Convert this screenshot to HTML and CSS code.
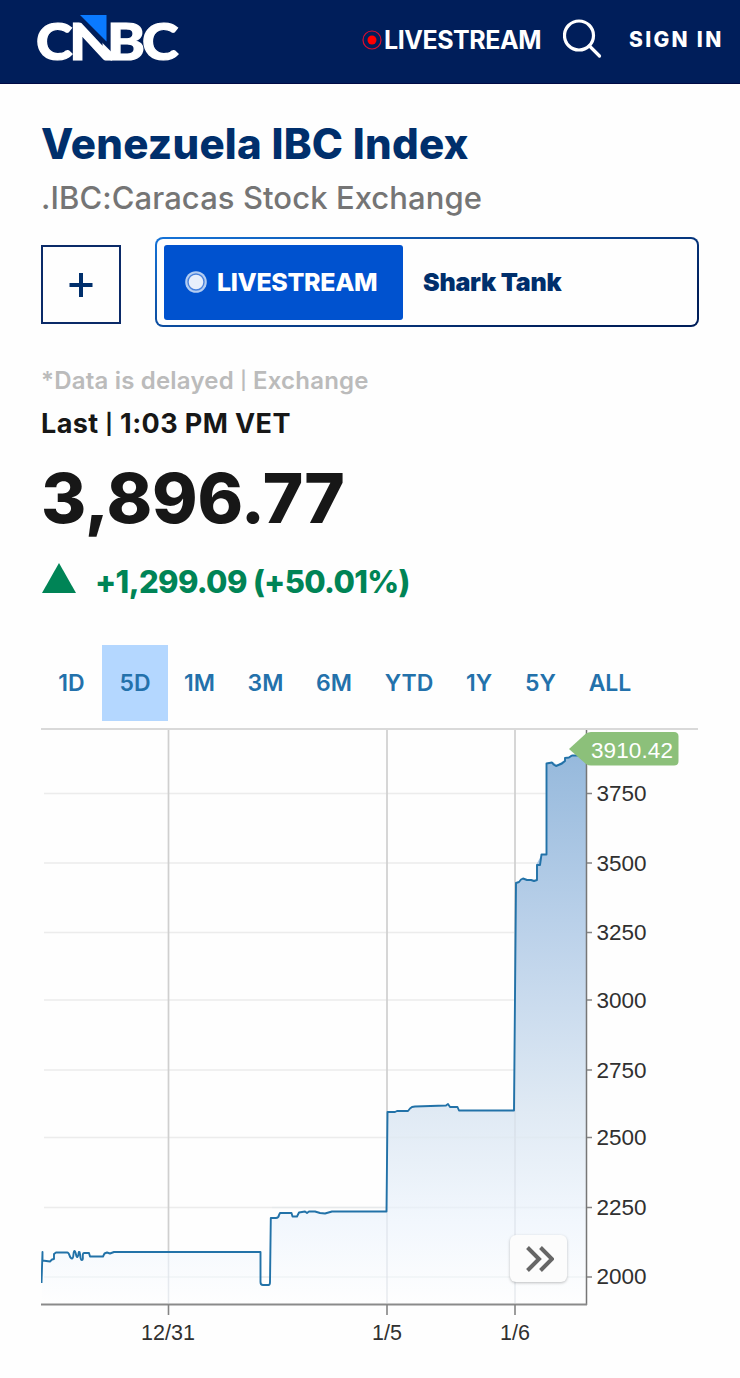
FILE: index.html
```html
<!DOCTYPE html>
<html lang="en">
<head>
	<meta charset="utf-8">
	<title>Venezuela IBC Index - CNBC</title>
	<link rel="stylesheet" href="styles.css">
</head>
<body>
	<header class="topbar">
		<svg class="logo" width="144" height="83" viewBox="36 0 144 83">
			<g class="logo-text">
				<text x="36" y="59.500" textLength="36.500" lengthAdjust="spacingAndGlyphs">C</text>
				<text x="69" y="59.500" textLength="47" lengthAdjust="spacingAndGlyphs">N</text>
			</g>
			<polygon points="80,12 113,12 113,53.5 80.500,21" fill="#001e5a"/>
			<polygon points="80,15 106.500,15 106.500,41.500" fill="#0a7aff"/>
			<g class="logo-text">
				<text x="107" y="59.500" textLength="38" lengthAdjust="spacingAndGlyphs">B</text>
				<text x="142" y="59.500" textLength="36.500" lengthAdjust="spacingAndGlyphs">C</text>
			</g>
		</svg>
		<a class="live-link">
			<svg width="20" height="20" viewBox="0 0 20 20">
				<circle cx="10" cy="10" r="9" fill="none" stroke="#d80d30" stroke-width="1.200"/>
				<circle cx="10" cy="10" r="4.500" fill="#ff0000"/>
			</svg>
			<span>LIVESTREAM</span>
		</a>
		<svg class="search" width="40" height="40" viewBox="0 0 40 40" fill="none" stroke="#fff" stroke-width="3.200" stroke-linecap="round">
			<circle cx="16" cy="16.500" r="14.500"/>
			<path d="M26.500 27L36.500 37"/>
		</svg>
		<a class="signin">SIGN IN</a>
	</header>

	<main>
		<h1>Venezuela IBC Index</h1>
		<h2>.IBC:Caracas Stock Exchange</h2>

		<div class="actions">
			<button class="add">
				<svg width="24" height="24" viewBox="0 0 24 24"><path d="M12 0V24M0.500 12H23.500" stroke="#002f6c" stroke-width="4"/></svg>
			</button>
			<div class="player">
				<div class="watch">
					<svg width="22" height="22" viewBox="0 0 22 22">
						<circle cx="11" cy="11" r="10.800" fill="#b3cdf2"/>
						<circle cx="11" cy="11" r="8" fill="#e8effb" stroke="#4a82dc" stroke-width="1.400"/>
					</svg>
					<span>LIVESTREAM</span>
				</div>
				<span class="show">Shark Tank</span>
			</div>
		</div>

		<div class="delayed">*Data is delayed <span class="bar">|</span> Exchange</div>
		<div class="last">Last <span class="bar">|</span> 1:03 PM VET</div>
		<div class="price">3,896.77</div>
		<div class="change">
			<svg width="34" height="30" viewBox="0 0 34 30"><polygon points="17,0 34,30 0,30" fill="#008456"/></svg>
			<span>+1,299.09 (+50.01%)</span>
		</div>

		<nav class="ranges">
			<a>1D</a>
			<a class="active">5D</a>
			<a>1M</a>
			<a>3M</a>
			<a>6M</a>
			<a>YTD</a>
			<a>1Y</a>
			<a>5Y</a>
			<a>ALL</a>
		</nav>

		<div class="chart">
			<svg width="657" height="630" viewBox="41 728 657 630">
				<defs>
					<linearGradient id="fill" gradientUnits="userSpaceOnUse" x1="0" y1="755" x2="0" y2="1304">
						<stop offset="0" stop-color="#96b9dc"/>
						<stop offset="0.300" stop-color="#b9d0e9"/>
						<stop offset="0.650" stop-color="#e0eaf4"/>
						<stop offset="0.850" stop-color="#f2f7fd"/>
						<stop offset="1" stop-color="#fefefe"/>
					</linearGradient>
				</defs>
				<path class="grid-h" d="M44 793.500H587M44 863H587M44 932.500H587M44 1000H587M44 1070H587M44 1137.500H587M44 1207.500H587M44 1277H587"/>
				<path class="grid-v" d="M168.500 729V1304M387 729V1304M515 729V1304"/>
				<path d="M41 729H698" stroke="#d9d9d9" stroke-width="2"/>
				<path class="area" fill="url(#fill)" d="M42 1283L43 1252V1260L50 1262L54 1258V1254L56 1252H68L71 1258L74 1251L77 1258L80 1252L82 1260L84 1253H89L90 1256H103L105 1253L114 1252H260.500V1282L262 1285H269L270.500 1218H277L280 1213H291L293 1216H297L299 1212L305 1211H318L324 1213L332 1211H386.500L387.500 1112L408 1110.500L412 1106.500L447 1105.500L449 1107H457L459 1110H514L516 883L523 878.500L536 880V865L542 854H546.500V763L553 762L557 765L563 761L571 755H586V1304H42Z"/>
				<path d="M168.500 1253V1303M387 1112V1303M515 1000V1303" stroke="#cbd3dc" stroke-opacity="0.450" stroke-width="1.500"/>
				<path d="M44 1277H586M272 1207.500H586M389 1137.500H586" stroke="#dde4ec" stroke-opacity="0.350" stroke-width="1.500"/>
				<path class="line" d="M41.500 1283L42.500 1252V1260.500L50 1261.500L52 1259.500L54 1259V1254L56 1252.500H67C70 1252 69 1258.500 72 1258.500C74 1258.500 73 1251 74.500 1251C76 1251 76 1258 77.500 1257C79 1256 78 1251 79.500 1252C80.500 1254 80 1260.500 82 1260C84 1260 81.500 1253 84 1253H89L90 1256.500H103L104.500 1253.500L107 1252.500L110 1253.500L114 1252H260.500V1282C260.500 1284 261 1285 263 1285H268.500Q270 1285 270 1282L270.800 1218H276Q278.500 1218 279 1215L280 1213H291.500L292.500 1216.500H297L299 1212.500L305 1211.500L307 1213L309 1211.500H315L320 1213L325 1213.500L332 1211.500H386.500L387.500 1112H395L397 1111H408L410 1108.500L412 1107L415 1106.500L446 1105.500L448 1104L450 1107H457.500L459 1110.500H514L516 883L519 882L521 879.500L523 878.500L527 880H531L534 881L537 880V865H540L541.500 854.500H546.500V763.500L552 762.500L553.500 764.500L556 766L562 763.500L565 761V758L569 757.500L572 755.500H586"/>
				<path d="M586.500 730V1305" stroke="#767676" stroke-width="1.500"/>
				<path d="M41 1304.500H587" stroke="#8a8a8a" stroke-width="1.800"/>
				<path d="M587 793.500H592M587 863H592M587 932.500H592M587 1000H592M587 1070H592M587 1137.500H592M587 1207.500H592M587 1277H592M168.500 1304V1315M387 1304V1315M515 1304V1315" stroke="#858585" stroke-width="1.600"/>
				<g class="axis">
					<text x="596.500" y="801">3750</text>
					<text x="596.500" y="870.500">3500</text>
					<text x="596.500" y="940">3250</text>
					<text x="596.500" y="1007.500">3000</text>
					<text x="596.500" y="1077.500">2750</text>
					<text x="596.500" y="1145">2500</text>
					<text x="596.500" y="1214.500">2250</text>
					<text x="596.500" y="1284">2000</text>
				</g>
				<g class="axis dates">
					<text x="168" y="1339.500">12/31</text>
					<text x="387" y="1339.500">1/5</text>
					<text x="515" y="1339.500">1/6</text>
				</g>
				<path d="M569 749L586 733.500Q588 732 591 732H674Q678.500 732 678.500 736.500V761Q678.500 765.500 674 765.500H591Q588 765.500 586 764Z" fill="#8cc07a"/>
				<text class="current" x="591" y="758" textLength="82">3910.42</text>
			</svg>
			<button class="forward">
				<svg width="28" height="26" viewBox="0 0 28 26" fill="none" stroke="#666" stroke-width="4"><path d="M1.500 1.500L13 13L1.500 24.500M14.500 1.500L26 13L14.500 24.500"/></svg>
			</button>
		</div>
	</main>
</body>
</html>
```
FILE: styles.css
```css
*{
	box-sizing: border-box;
}
body{
	background-color: #fefefe;
	font-family: Inter, "Open Sans", sans-serif;
	margin: 0px;
}
button{
	background: none;
	border: none;
	padding: 0px;
}
svg{
	display: block;
	flex: none;
}
.topbar{
	align-items: center;
	background-color: #001e5a;
	border-bottom: 1px solid #000b45;
	color: #fff;
	display: flex;
	height: 84px;
	padding: 0px 0px 0px 36px;
	white-space: nowrap;
}
.logo-text{
	fill: #fff;
	font-family: Lato, sans-serif;
	font-size: 51px;
	font-weight: 900;
	stroke: #fff;
	stroke-width: 1.2;
}
.live-link{
	align-items: center;
	display: flex;
	font-size: 25px;
	font-weight: 700;
	gap: 2px;
	letter-spacing: -0.45px;
	margin: -4px 0px 0px 182px;
	width: 201px;
}
.search{
	margin-top: -6px;
}
.signin{
	font-size: 21px;
	font-weight: 800;
	letter-spacing: 2.3px;
	margin: -4px 0px 0px 26px;
}
main{
	padding: 35px 41px 0px;
}
h1{
	color: #002f6c;
	font-size: 42px;
	font-weight: 800;
	letter-spacing: 0.25px;
	line-height: 50px;
	margin: 0px;
}
h2{
	color: #757575;
	font-size: 31px;
	font-weight: 500;
	letter-spacing: 0.08px;
	line-height: 40px;
	margin: 9px 0px 0px;
	height: 59px;
}
.actions{
	display: flex;
	align-items: flex-end;
	gap: 34px;
}
.add{
	align-items: center;
	border: 2px solid #0b2a68;
	display: flex;
	height: 79px;
	justify-content: center;
	margin-bottom: 3px;
	width: 80px;
}
.player{
	align-items: center;
	background: linear-gradient(#fefefe, #fefefe) padding-box, linear-gradient(165deg, #1573d8, #001e5a 85%) border-box;
	border: 2px solid transparent;
	border-radius: 8px;
	display: flex;
	flex: 1;
	height: 90px;
	padding-left: 7px;
}
.watch{
	align-items: center;
	background-color: #0052cf;
	border-radius: 3px;
	color: #fff;
	display: flex;
	font-size: 25px;
	font-weight: 800;
	gap: 10px;
	height: 75px;
	letter-spacing: -0.35px;
	padding-left: 21px;
	width: 239px;
}
.show{
	color: #002f6c;
	font-size: 25px;
	font-weight: 900;
	letter-spacing: -0.25px;
	margin-left: 20px;
}
.bar{
	font-size: 0.75em;
	vertical-align: 2px;
}
.delayed{
	color: #bbb;
	font-size: 24px;
	font-weight: 600;
	letter-spacing: 0.2px;
	line-height: 30px;
	margin-top: 39px;
}
.last{
	color: #171717;
	font-size: 27px;
	font-weight: 700;
	letter-spacing: 0.4px;
	line-height: 34px;
	margin-top: 11px;
}
.price{
	color: #171717;
	font-size: 69px;
	font-weight: 800;
	letter-spacing: -0.3px;
	line-height: 80px;
	margin-top: 17px;
}
.change{
	align-items: center;
	color: #008456;
	display: flex;
	font-size: 31px;
	font-weight: 800;
	gap: 19px;
	height: 40px;
	letter-spacing: -0.65px;
	margin-top: 23px;
	padding-left: 1px;
}
.change svg{
	margin-top: -7px;
}
.ranges{
	color: #2371ab;
	display: grid;
	font-size: 23px;
	font-weight: 600;
	grid-template-columns: 61px 66px 63px 69px 68px 82px 58px 65px 74px;
	height: 75px;
	line-height: 76px;
	margin-top: 44px;
	text-align: center;
}
.ranges .active{
	background-color: #b4d7ff;
}
.chart{
	margin-top: 8px;
	position: relative;
}
.grid-h{
	stroke: #ececec;
	stroke-width: 1.7;
}
.grid-v{
	stroke: #cfcfcf;
	stroke-width: 1.7;
}
.line{
	fill: none;
	stroke: #2272a8;
	stroke-linejoin: round;
	stroke-width: 1.9;
}
.axis{
	fill: #303030;
	font-family: "Liberation Sans", Arial, sans-serif;
	font-size: 22.5px;
}
.dates{
	font-size: 21.5px;
	text-anchor: middle;
}
.current{
	fill: #fff;
	font-family: "Liberation Sans", Arial, sans-serif;
	font-size: 22.5px;
}
.forward{
	align-items: center;
	background-color: #fcfcfc;
	border-radius: 6px;
	box-shadow: 0px 1px 3px rgba(0,0,0,.25);
	display: flex;
	height: 47px;
	justify-content: center;
	left: 469px;
	padding-left: 3px;
	position: absolute;
	top: 507px;
	width: 57px;
}
```
